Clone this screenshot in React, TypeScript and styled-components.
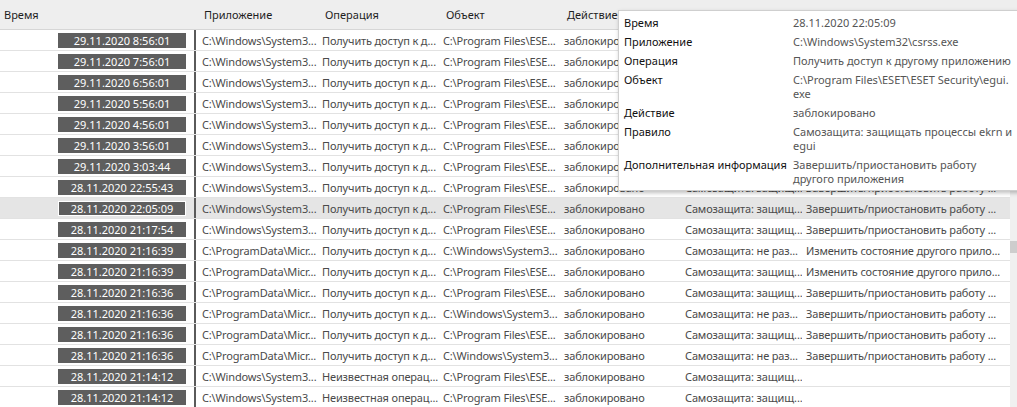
import styled, { createGlobalStyle } from "styled-components";

const GlobalStyle = createGlobalStyle`
  html, body {
    margin: 0;
    padding: 0;
    background: #ffffff;
    overflow: hidden;
  }
  body {
    font-family: "Noto Sans", "Open Sans", sans-serif;
    font-size: 11px;
  }
`;

const COLS = "194px 124px 121px 121px 121px 121px 1fr";

const Page = styled.div`
  position: relative;
  width: 1017px;
  height: 407px;
  overflow: hidden;
  display: flex;
  flex-direction: column;
`;

const Header = styled.div`
  display: grid;
  grid-template-columns: ${COLS};
  height: 29px;
  align-items: center;
  background: #eeeeee;
  border-bottom: 1px solid #d6d6d6;
  color: #1e1e1e;
`;

const HeadCell = styled.div<{ $pad: number }>`
  padding-left: ${(p) => p.$pad}px;
  white-space: nowrap;
`;

const Body = styled.div`
  display: flex;
  flex: 1;
  min-height: 0;
`;

const List = styled.div`
  flex: 1;
  display: flex;
  flex-direction: column;
`;

const Row = styled.div<{ $selected?: boolean }>`
  display: grid;
  grid-template-columns: ${COLS};
  height: 20px;
  flex: none;
  border-bottom: 1px solid #e2e2e2;
  background: ${(p) => (p.$selected ? "#e5e5e5" : "#ffffff")};
  color: #4a4a4a;
`;

const TimeCell = styled.div`
  display: flex;
  justify-content: flex-end;
  align-items: center;
  padding-right: 8px;
`;

const Badge = styled.div<{ $selected?: boolean }>`
  width: 126px;
  height: 13px;
  line-height: 13px;
  text-align: center;
  background: #5e5e5e;
  color: #ffffff;
  border: 1px solid ${(p) => (p.$selected ? "#ffffff" : "#5e5e5e")};
`;

const Cell = styled.div<{ $first?: boolean }>`
  display: flex;
  align-items: center;
  padding-left: ${(p) => (p.$first ? 6 : 4)}px;
  border-left: ${(p) => (p.$first ? "2px solid #5a5a5a" : "none")};
  white-space: nowrap;
  overflow: hidden;
  letter-spacing: -0.15px;
`;

const ScrollTrack = styled.div`
  width: 7px;
  background: #f0f0f0;
`;

const Thumb = styled.div`
  margin-top: 211px;
  height: 12px;
  background: #cdcdcd;
`;

const Tooltip = styled.div`
  position: absolute;
  left: 618px;
  top: 10px;
  width: 420px;
  padding: 5px 0 4px 5px;
  background: #ffffff;
  border: 1px solid #cfcfcf;
  box-shadow: 1px 2px 4px rgba(0, 0, 0, 0.25);
  display: grid;
  grid-template-columns: 169px 1fr;
  row-gap: 5px;
  line-height: 14px;
`;

const TipLabel = styled.div`
  color: #111111;
  white-space: nowrap;
`;

const TipValue = styled.div`
  color: #555555;
  white-space: nowrap;
`;

const SYS = "C:\\Windows\\System3...";
const PD = "C:\\ProgramData\\Micr...";
const GET = "Получить доступ к д...";
const UNK = "Неизвестная операц...";
const ESE = "C:\\Program Files\\ESE...";
const PROT = "Самозащита: защищ...";
const NOT = "Самозащита: не раз...";
const STOP = "Завершить/приостановить работу ...";
const CHANGE = "Изменить состояние другого прило...";

type Entry = [string, string, string, string, string, string];

const rows: Entry[] = [
  ["29.11.2020 8:56:01", SYS, GET, ESE, PROT, STOP],
  ["29.11.2020 7:56:01", SYS, GET, ESE, PROT, STOP],
  ["29.11.2020 6:56:01", SYS, GET, ESE, PROT, STOP],
  ["29.11.2020 5:56:01", SYS, GET, ESE, PROT, STOP],
  ["29.11.2020 4:56:01", SYS, GET, ESE, PROT, STOP],
  ["29.11.2020 3:56:01", SYS, GET, ESE, PROT, STOP],
  ["29.11.2020 3:03:44", SYS, GET, ESE, PROT, STOP],
  ["28.11.2020 22:55:43", SYS, GET, ESE, PROT, STOP],
  ["28.11.2020 22:05:09", SYS, GET, ESE, PROT, STOP],
  ["28.11.2020 21:17:54", SYS, GET, ESE, PROT, STOP],
  ["28.11.2020 21:16:39", PD, GET, SYS, NOT, CHANGE],
  ["28.11.2020 21:16:39", PD, GET, ESE, PROT, CHANGE],
  ["28.11.2020 21:16:36", PD, GET, ESE, PROT, STOP],
  ["28.11.2020 21:16:36", PD, GET, SYS, NOT, STOP],
  ["28.11.2020 21:16:36", PD, GET, ESE, PROT, STOP],
  ["28.11.2020 21:16:36", PD, GET, SYS, NOT, STOP],
  ["28.11.2020 21:14:12", SYS, UNK, ESE, PROT, ""],
  ["28.11.2020 21:14:12", SYS, UNK, ESE, PROT, ""],
];

const SELECTED = 8;

const details: [string, string[]][] = [
  ["Время", ["28.11.2020 22:05:09"]],
  ["Приложение", ["C:\\Windows\\System32\\csrss.exe"]],
  ["Операция", ["Получить доступ к другому приложению"]],
  ["Объект", ["C:\\Program Files\\ESET\\ESET Security\\egui.", "exe"]],
  ["Действие", ["заблокировано"]],
  ["Правило", ["Самозащита: защищать процессы ekrn и", "egui"]],
  ["Дополнительная информация", ["Завершить/приостановить работу", "другого приложения"]],
];

const App = () => {
  return (
    <Page>
      <GlobalStyle />
      <Header>
        <HeadCell $pad={4}>Время</HeadCell>
        <HeadCell $pad={10}>Приложение</HeadCell>
        <HeadCell $pad={7}>Операция</HeadCell>
        <HeadCell $pad={7}>Объект</HeadCell>
        <HeadCell $pad={7}>Действие</HeadCell>
        <HeadCell $pad={7}>Правило</HeadCell>
        <HeadCell $pad={7}>Дополнительная информация</HeadCell>
      </Header>
      <Body>
        <List>
          {rows.map((r, i) => (
            <Row key={i} $selected={i === SELECTED}>
              <TimeCell>
                <Badge $selected={i === SELECTED}>{r[0]}</Badge>
              </TimeCell>
              <Cell $first>{r[1]}</Cell>
              <Cell>{r[2]}</Cell>
              <Cell>{r[3]}</Cell>
              <Cell>заблокировано</Cell>
              <Cell>{r[4]}</Cell>
              <Cell>{r[5]}</Cell>
            </Row>
          ))}
        </List>
        <ScrollTrack>
          <Thumb />
        </ScrollTrack>
      </Body>
      <Tooltip>
        {details.map(([label, lines]) => [
          <TipLabel key={label + "l"}>{label}</TipLabel>,
          <TipValue key={label + "v"}>
            {lines.map((l, j) => (
              <div key={j}>{l}</div>
            ))}
          </TipValue>,
        ])}
      </Tooltip>
    </Page>
  );
};

export default App;
